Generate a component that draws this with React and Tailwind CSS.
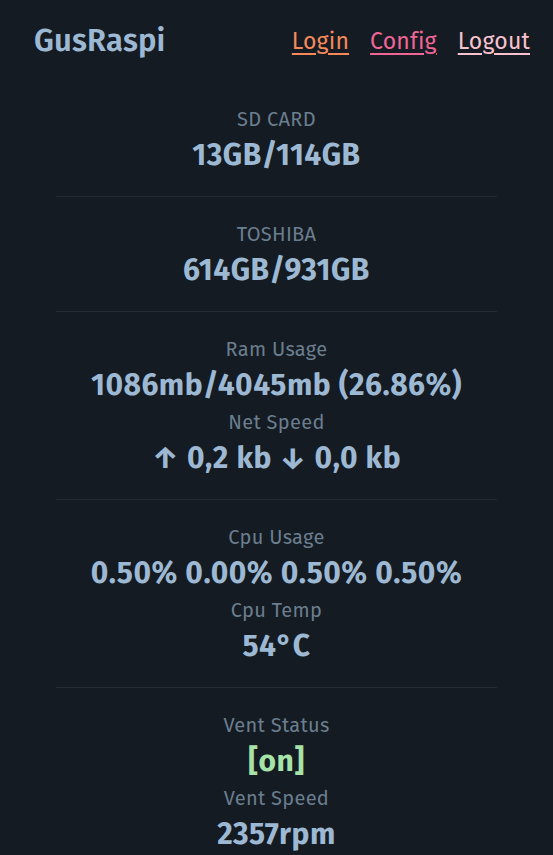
import React from 'react';

const stats = [
  { rows: [{ label: 'SD CARD', value: '13GB/114GB' }] },
  { rows: [{ label: 'TOSHIBA', value: '614GB/931GB' }] },
  {
    rows: [
      { label: 'Ram Usage', value: '1086mb/4045mb (26.86%)' },
      { label: 'Net Speed', value: '↑ 0,2 kb ↓ 0,0 kb' },
    ],
  },
  {
    rows: [
      { label: 'Cpu Usage', value: '0.50% 0.00% 0.50% 0.50%' },
      { label: 'Cpu Temp', value: '54°C' },
    ],
  },
  {
    rows: [
      { label: 'Vent Status', value: '[on]', green: true },
      { label: 'Vent Speed', value: '2357rpm' },
    ],
  },
];

export default function App() {
  return (
    <div
      className="min-h-screen w-full bg-[#141b22] text-[#9db8d2] overflow-hidden"
      style={{ fontFamily: '"Fira Sans", "Noto Sans", "Open Sans", sans-serif' }}
    >
      {/* Header */}
      <header className="flex items-center justify-between pl-[34px] pr-[23px] h-[82px]">
        <span className="text-[31px] font-semibold tracking-[0.2px]">GusRaspi</span>
        <nav className="flex items-center gap-[21px] text-[23px] tracking-[0.2px]">
          <a href="#" className="text-[#f5895a] underline underline-offset-4">Login</a>
          <a href="#" className="text-[#ef6596] underline underline-offset-4">Config</a>
          <a href="#" className="text-[#f8c2cf] underline underline-offset-4">Logout</a>
        </nav>
      </header>

      {/* Stats */}
      <main className="mx-[56px]">
        {stats.map((s, i) => (
          <section
            key={i}
            className={`flex flex-col items-center text-center pt-[21px] pb-[20px] ${
              i < stats.length - 1 ? 'border-b border-[#232c35]' : ''
            }`}
          >
            {s.rows.map((r) => (
              <div key={r.label} className="flex flex-col items-center">
                <span className="text-[20px] leading-[32px] tracking-[0.3px] text-[#6b7e8f]">{r.label}</span>
                <span
                  className={`text-[30px] leading-[41px] font-bold tracking-[0.5px] whitespace-nowrap ${
                    r.green ? 'text-[#a5e3a8]' : ''
                  }`}
                >
                  {r.value}
                </span>
              </div>
            ))}
          </section>
        ))}
      </main>
    </div>
  );
}
